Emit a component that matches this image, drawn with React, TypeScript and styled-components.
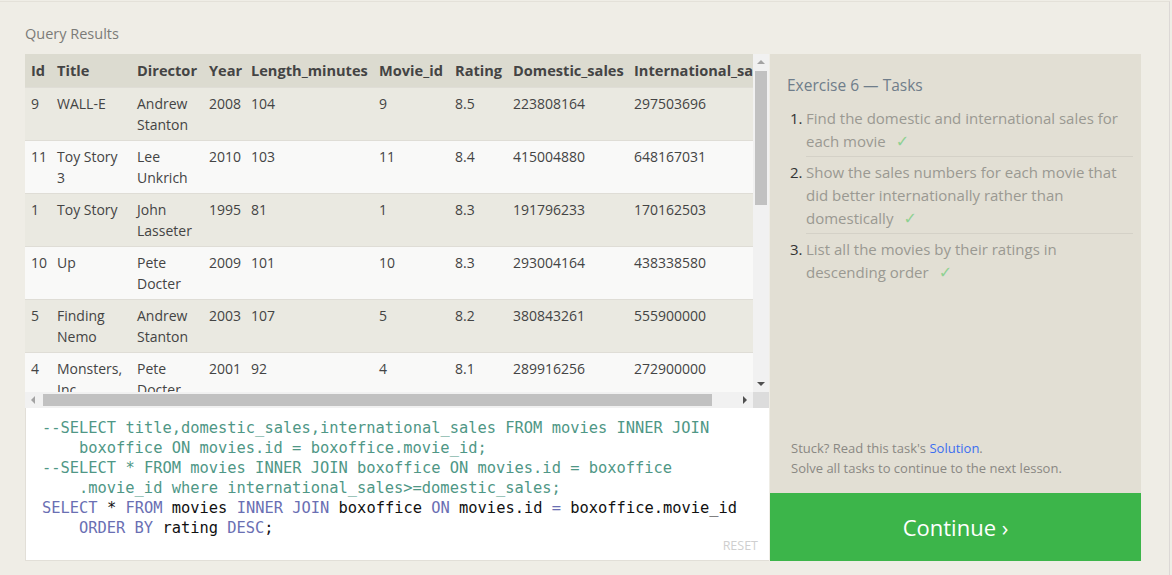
import React from "react";
import styled, { createGlobalStyle } from "styled-components";

const Global = createGlobalStyle`
  html, body { margin: 0; padding: 0; background: #efede6; }
  body { font-family: "Open Sans", "Noto Sans", Arial, sans-serif; color: #444; }
  * { box-sizing: border-box; }
`;

const Frame = styled.div`
  width: 1170px;
  height: 574px;
  margin-top: 1px;
  border-top: 1px solid #e4e1d9;
  border-right: 1px solid #dcd8d6;
  padding: 22px 28px 0 25px;
`;

const Heading = styled.div`
  font-size: 14.5px;
  line-height: 20px;
  color: #7b7b78;
  margin-bottom: 10px;
`;

const Workspace = styled.div`
  display: flex;
  gap: 1px;
  height: 507px;
`;

const LeftPane = styled.div`
  width: 744px;
  display: flex;
  flex-direction: column;
`;

const ResultsBox = styled.div`
  display: grid;
  grid-template-columns: 728px 16px;
  grid-template-rows: 338px 16px;
  height: 354px;
`;

const Viewport = styled.div`
  overflow: hidden;
  background: #f9f9f8;
`;

const Table = styled.table`
  border-collapse: collapse;
  table-layout: fixed;
  width: 758px;
  font-size: 14px;
  color: #444;
`;

const Th = styled.th`
  background: #dcdbd0;
  font-weight: 700;
  font-size: 14.6px;
  text-align: left;
  padding: 6px 6px;
  line-height: 21px;
  white-space: nowrap;
  overflow: visible;
  color: #444;
`;

const Tr = styled.tr<{ $odd: boolean }>`
  background: ${(p) => (p.$odd ? "#eae9e1" : "#f9f9f8")};
  border-top: 1px solid #dfddd6;
`;

const Td = styled.td`
  padding: 5px 6px 5px 6px;
  line-height: 21px;
  vertical-align: top;
  height: 53px;
`;

const Track = styled.div<{ $vertical?: boolean }>`
  background: #f1f1f1;
  display: flex;
  flex-direction: ${(p) => (p.$vertical ? "column" : "row")};
  align-items: stretch;
`;

const ArrowBtn = styled.div`
  width: 16px;
  height: 16px;
  flex: none;
  display: flex;
  align-items: center;
  justify-content: center;
`;

const Thumb = styled.div<{ $vertical?: boolean; $size: number; $offset: number }>`
  background: #c1c1c1;
  flex: none;
  ${(p) =>
    p.$vertical
      ? `width: 12px; height: ${p.$size}px; margin: ${p.$offset}px 2px 0 2px;`
      : `height: 12px; width: ${p.$size}px; margin: 2px 0 2px ${p.$offset}px;`}
`;

const Spacer = styled.div`
  flex: 1;
`;

const Corner = styled.div`
  background: #dcdcdc;
`;

const Editor = styled.div`
  flex: 1;
  background: #fff;
  border-left: 1px solid #e2dfd8;
  border-bottom: 1px solid #e2dfd8;
  padding: 10px 11px 6px 16px;
  display: flex;
  flex-direction: column;
`;

const CodeLine = styled.div<{ $indent?: boolean }>`
  font-family: "DejaVu Sans Mono", "Liberation Mono", monospace;
  font-size: 15.4px;
  line-height: 20px;
  white-space: pre;
  color: #111;
  padding-left: ${(p) => (p.$indent ? "37px" : "0")};
`;

const Tok = styled.span<{ $kind: "c" | "k" | "p" }>`
  color: ${(p) => (p.$kind === "c" ? "#4f9786" : p.$kind === "k" ? "#6a6fb3" : "#111")};
`;

const Reset = styled.div`
  margin-top: auto;
  align-self: flex-end;
  font-size: 12.5px;
  color: #cfcfcf;
  line-height: 16px;
`;

const RightPane = styled.div`
  width: 371px;
  display: flex;
  flex-direction: column;
`;

const TaskPanel = styled.div`
  flex: 1;
  background: #e2dfd4;
  padding: 20px 8px 15px 17px;
  display: flex;
  flex-direction: column;
`;

const TaskTitle = styled.div`
  font-size: 15.5px;
  line-height: 22px;
  color: #6f7d8a;
`;

const TaskList = styled.div`
  margin: 7px 0 0 3px;
  display: flex;
  flex-direction: column;
`;

const TaskItem = styled.div`
  display: flex;
`;

const TaskNum = styled.div`
  width: 16px;
  flex: none;
  font-size: 15px;
  line-height: 23px;
  padding-top: 4px;
  color: #333;
`;

const TaskBody = styled.div<{ $last?: boolean }>`
  flex: 1;
  font-size: 15px;
  line-height: 23px;
  color: #9a9992;
  padding: 4px 0 3px;
  border-bottom: ${(p) => (p.$last ? "none" : "1px solid #d4d1c7")};
`;

const Check = styled.span`
  color: #8fd192;
  margin-left: 10px;
  font-family: "DejaVu Sans", sans-serif;
  font-size: 16px;
  line-height: 1;
`;

const Hints = styled.div`
  margin-top: auto;
  padding-left: 4px;
  font-size: 13px;
  line-height: 20px;
  color: #8a8883;
`;

const Link = styled.a`
  color: #3b6ef0;
  text-decoration: none;
`;

const ContinueButton = styled.div`
  height: 68px;
  background: #3cb54a;
  color: #fff;
  font-size: 22px;
  display: flex;
  align-items: center;
  justify-content: center;
`;

type Dir = "up" | "down" | "left" | "right";
const Arrow = ({ dir, dim }: { dir: Dir; dim?: boolean }) => {
  const pts: Record<Dir, string> = {
    up: "4,2 8,6 0,6",
    down: "0,2 8,2 4,6",
    left: "6,0 6,8 2,4",
    right: "2,0 6,4 2,8",
  };
  return (
    <svg width="8" height="8" viewBox="0 0 8 8">
      <polygon points={pts[dir]} fill={dim ? "#a3a3a3" : "#505050"} />
    </svg>
  );
};

const cols = [26, 80, 72, 42, 128, 76, 58, 121, 155];
const headers = ["Id", "Title", "Director", "Year", "Length_minutes", "Movie_id", "Rating", "Domestic_sales", "International_sales"];
const rows = [
  ["9", "WALL-E", "Andrew Stanton", "2008", "104", "9", "8.5", "223808164", "297503696"],
  ["11", "Toy Story 3", "Lee Unkrich", "2010", "103", "11", "8.4", "415004880", "648167031"],
  ["1", "Toy Story", "John Lasseter", "1995", "81", "1", "8.3", "191796233", "170162503"],
  ["10", "Up", "Pete Docter", "2009", "101", "10", "8.3", "293004164", "438338580"],
  ["5", "Finding Nemo", "Andrew Stanton", "2003", "107", "5", "8.2", "380843261", "555900000"],
  ["4", "Monsters, Inc.", "Pete Docter", "2001", "92", "4", "8.1", "289916256", "272900000"],
];

type T = [string, "c" | "k" | "p"];
const code: { indent?: boolean; toks: T[] }[] = [
  { toks: [["--SELECT title,domestic_sales,international_sales FROM movies INNER JOIN", "c"]] },
  { indent: true, toks: [["boxoffice ON movies.id = boxoffice.movie_id;", "c"]] },
  { toks: [["--SELECT * FROM movies INNER JOIN boxoffice ON movies.id = boxoffice", "c"]] },
  { indent: true, toks: [[".movie_id where international_sales>=domestic_sales;", "c"]] },
  {
    toks: [
      ["SELECT", "k"], [" * ", "p"], ["FROM", "k"], [" movies ", "p"], ["INNER JOIN", "k"],
      [" boxoffice ", "p"], ["ON", "k"], [" movies.id ", "p"], ["=", "k"], [" boxoffice.movie_id", "p"],
    ],
  },
  { indent: true, toks: [["ORDER BY", "k"], [" rating ", "p"], ["DESC", "k"], [";", "p"]] },
];

const tasks = [
  "Find the domestic and international sales for each movie",
  "Show the sales numbers for each movie that did better internationally rather than domestically",
  "List all the movies by their ratings in descending order",
];

export default function App() {
  return (
    <>
      <Global />
      <Frame>
        <Heading>Query Results</Heading>
        <Workspace>
          <LeftPane>
            <ResultsBox>
              <Viewport>
                <Table>
                  <colgroup>
                    {cols.map((w, i) => (
                      <col key={i} style={{ width: w }} />
                    ))}
                  </colgroup>
                  <thead>
                    <tr>
                      {headers.map((h) => (
                        <Th key={h}>{h}</Th>
                      ))}
                    </tr>
                  </thead>
                  <tbody>
                    {rows.map((r, i) => (
                      <Tr key={i} $odd={i % 2 === 0}>
                        {r.map((c, j) => (
                          <Td key={j}>{c}</Td>
                        ))}
                      </Tr>
                    ))}
                  </tbody>
                </Table>
              </Viewport>
              <Track $vertical>
                <ArrowBtn><Arrow dir="up" dim /></ArrowBtn>
                <Thumb $vertical $size={134} $offset={1} />
                <Spacer />
                <ArrowBtn><Arrow dir="down" /></ArrowBtn>
              </Track>
              <Track>
                <ArrowBtn><Arrow dir="left" dim /></ArrowBtn>
                <Thumb $size={669} $offset={2} />
                <Spacer />
                <ArrowBtn><Arrow dir="right" /></ArrowBtn>
              </Track>
              <Corner />
            </ResultsBox>
            <Editor>
              {code.map((l, i) => (
                <CodeLine key={i} $indent={l.indent}>
                  {l.toks.map(([t, k], j) => (
                    <Tok key={j} $kind={k}>{t}</Tok>
                  ))}
                </CodeLine>
              ))}
              <Reset>RESET</Reset>
            </Editor>
          </LeftPane>
          <RightPane>
            <TaskPanel>
              <TaskTitle>Exercise 6 — Tasks</TaskTitle>
              <TaskList>
                {tasks.map((t, i) => (
                  <TaskItem key={i}>
                    <TaskNum>{i + 1}.</TaskNum>
                    <TaskBody $last={i === tasks.length - 1}>
                      {t}
                      <Check>✓</Check>
                    </TaskBody>
                  </TaskItem>
                ))}
              </TaskList>
              <Hints>
                <div>
                  Stuck? Read this task's <Link>Solution</Link>.
                </div>
                <div>Solve all tasks to continue to the next lesson.</div>
              </Hints>
            </TaskPanel>
            <ContinueButton>Continue ›</ContinueButton>
          </RightPane>
        </Workspace>
      </Frame>
    </>
  );
}
